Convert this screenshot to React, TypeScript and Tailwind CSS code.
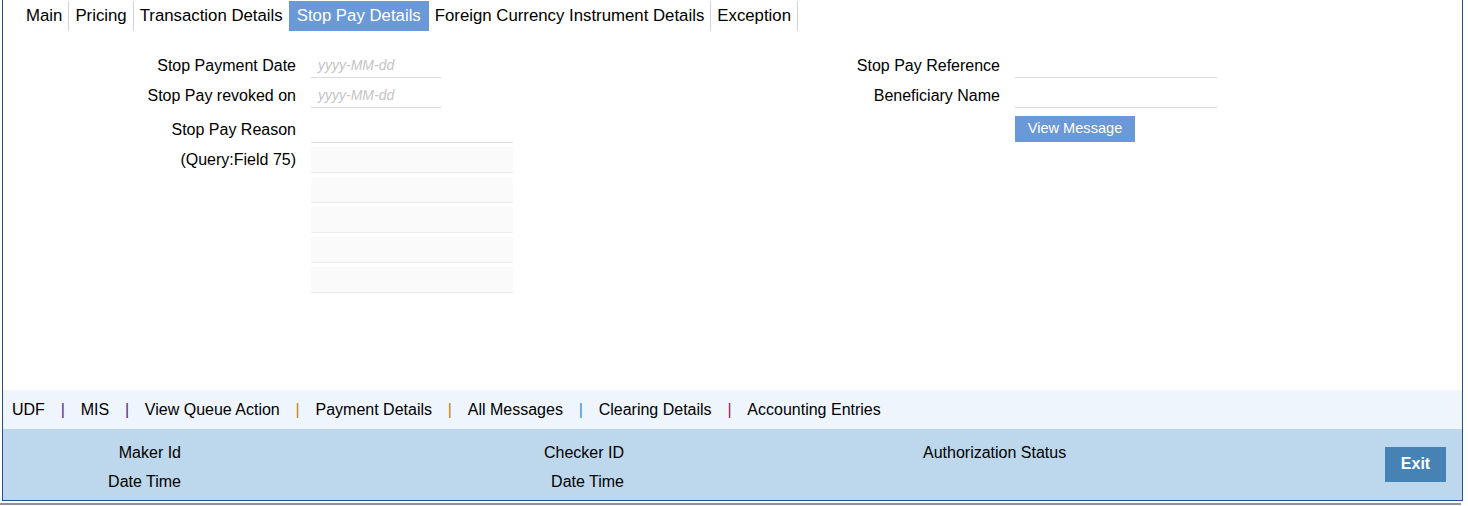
import React from "react";

const tabs = [
  { label: "Main" },
  { label: "Pricing" },
  { label: "Transaction Details", beforeActive: true },
  { label: "Stop Pay Details", active: true },
  { label: "Foreign Currency Instrument Details" },
  { label: "Exception" },
];

const links: { label: string; sep?: string }[] = [
  { label: "UDF", sep: "text-[#5b1f8f]" },
  { label: "MIS", sep: "text-[#5b1f8f]" },
  { label: "View Queue Action", sep: "text-[#c5801f]" },
  { label: "Payment Details", sep: "text-[#c5801f]" },
  { label: "All Messages", sep: "text-[#3a8fd6]" },
  { label: "Clearing Details", sep: "text-[#95195a]" },
  { label: "Accounting Entries" },
];

function DateInput() {
  return (
    <div className="ml-[15px] w-[130px] h-[25px] border-b border-[#dadada] flex items-center pl-[7px] italic text-[14px] text-[#c4c4c4]">
      yyyy-MM-dd
    </div>
  );
}

function TextInput({ h = "h-[25px]" }: { h?: string }) {
  return <div className={`ml-[15px] w-[202px] ${h} border-b border-[#dadada]`} />;
}

export default function App() {
  return (
    <div className="w-[1468px] h-[506px] bg-white text-[16px] text-black font-['Liberation_Sans',Arial,sans-serif]">
      <div className="ml-[2px] w-[1461px] h-[501px] border-l border-r border-b border-[#24509a] flex flex-col">
        {/* Tabs */}
        <div className="flex h-[31px] pl-[17px] pt-[1px] text-[16.8px]">
          {tabs.map((t) =>
            t.active ? (
              <div
                key={t.label}
                className="h-[30px] px-[8px] flex items-center bg-[#6b98d6] text-white"
              >
                {t.label}
              </div>
            ) : (
              <div
                key={t.label}
                className={`h-[30px] px-[6px] flex items-center ${
                  t.beforeActive ? "" : "border-r border-[#d2d2d2]"
                }`}
              >
                {t.label}
              </div>
            )
          )}
        </div>

        {/* Form */}
        <div className="flex pt-[22px]">
          <div className="w-[704px] flex flex-col">
            <div className="flex items-center h-[25px]">
              <div className="w-[293px] text-right">Stop Payment Date</div>
              <DateInput />
            </div>
            <div className="flex items-center h-[25px] mt-[5px]">
              <div className="w-[293px] text-right">Stop Pay revoked on</div>
              <DateInput />
            </div>
            <div className="flex items-center h-[26px] mt-[9px]">
              <div className="w-[293px] text-right pb-[1px]">Stop Pay Reason</div>
              <TextInput h="h-[26px]" />
            </div>
            <div className="flex items-start">
              <div className="w-[293px] text-right h-[26px] mt-[4px] flex items-center justify-end">
                (Query:Field 75)
              </div>
              <div className="ml-[15px] flex flex-col">
                {[0, 1, 2, 3, 4].map((i) => (
                  <div
                    key={i}
                    className="mt-[4px] w-[202px] h-[26px] bg-[#fafafa] border-b border-[#ececec]"
                  />
                ))}
              </div>
            </div>
          </div>
          <div className="w-[704px] flex flex-col">
            <div className="flex items-center h-[25px]">
              <div className="w-[293px] text-right">Stop Pay Reference</div>
              <TextInput />
            </div>
            <div className="flex items-center h-[25px] mt-[5px]">
              <div className="w-[293px] text-right">Beneficiary Name</div>
              <TextInput />
            </div>
            <div className="flex items-center mt-[8px]">
              <div className="w-[293px]" />
              <button className="ml-[15px] w-[120px] h-[26px] bg-[#6b98d6] text-white text-[14.6px] flex items-center justify-center">
                View Message
              </button>
            </div>
          </div>
        </div>

        <div className="flex-1" />

        {/* Links bar */}
        <div className="h-[39px] bg-[#eef5fd] flex items-center pl-[9px]">
          {links.map((l) => (
            <React.Fragment key={l.label}>
              <span>{l.label}</span>
              {l.sep && <span className={`mx-[15.8px] ${l.sep}`}>|</span>}
            </React.Fragment>
          ))}
        </div>

        {/* Footer */}
        <div className="h-[71px] bg-[#bdd8ec] flex items-start">
          <div className="w-[178px] pt-[13px] flex flex-col items-end">
            <div className="h-[22px] flex items-center">Maker Id</div>
            <div className="h-[22px] mt-[7px] flex items-center">Date Time</div>
          </div>
          <div className="w-[443px] pt-[13px] flex flex-col items-end">
            <div className="h-[22px] flex items-center">Checker ID</div>
            <div className="h-[22px] mt-[7px] flex items-center">Date Time</div>
          </div>
          <div className="ml-[299px] pt-[13px]">
            <div className="h-[22px] flex items-center">Authorization Status</div>
          </div>
          <button className="ml-auto mr-[16px] mt-[18px] w-[61px] h-[35px] pb-[2px] bg-[#4682b4] text-white font-bold text-[16px] flex items-center justify-center">
            Exit
          </button>
        </div>
      </div>
      <div className="mt-[2px] w-[1461px] h-[2px] bg-[#8792a6]" />
    </div>
  );
}
